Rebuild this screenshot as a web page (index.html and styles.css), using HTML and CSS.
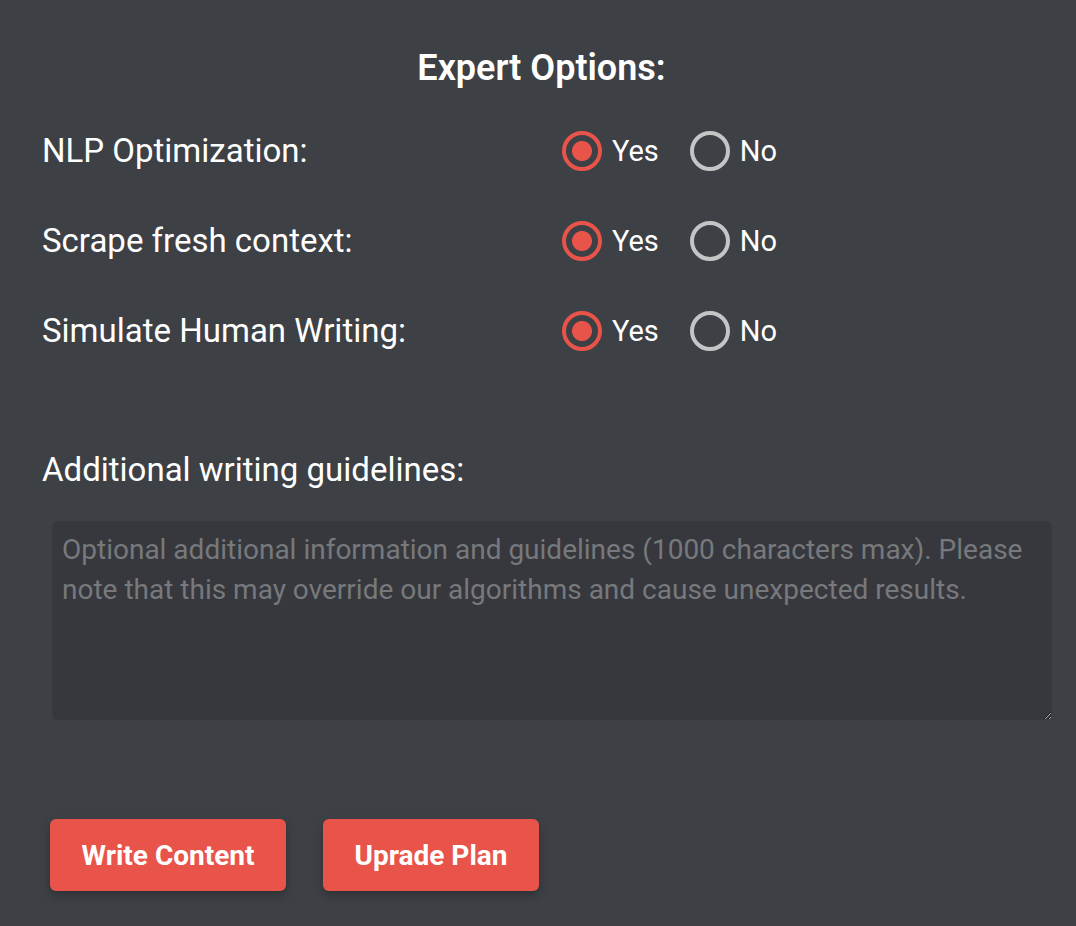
FILE: index.html
```html
<!DOCTYPE html>
<html lang="en">
<head>
    <meta charset="UTF-8">
    <meta name="viewport" content="width=device-width, initial-scale=1.0">
    <title>Expert Options</title>
    <link rel="stylesheet" href="styles.css">
</head>
<body>
    <div class="panel">
        <h2 class="panel-title">Expert Options:</h2>

        <!-- Toggles -->
        <div class="option-row">
            <div class="option-label">NLP Optimization:</div>
            <div class="option-choices">
                <label class="choice"><input type="radio" name="nlp" checked> Yes</label>
                <label class="choice"><input type="radio" name="nlp"> No</label>
            </div>
        </div>
        <div class="option-row">
            <div class="option-label">Scrape fresh context:</div>
            <div class="option-choices">
                <label class="choice"><input type="radio" name="scrape" checked> Yes</label>
                <label class="choice"><input type="radio" name="scrape"> No</label>
            </div>
        </div>
        <div class="option-row">
            <div class="option-label">Simulate Human Writing:</div>
            <div class="option-choices">
                <label class="choice"><input type="radio" name="human" checked> Yes</label>
                <label class="choice"><input type="radio" name="human"> No</label>
            </div>
        </div>

        <!-- Guidelines -->
        <div class="guidelines-label">Additional writing guidelines:</div>
        <textarea class="guidelines-input" maxlength="1000" placeholder="Optional additional information and guidelines (1000 characters max). Please note that this may override our algorithms and cause unexpected results."></textarea>

        <div class="actions">
            <button class="action-button">Write Content</button>
            <button class="action-button">Uprade Plan</button>
        </div>
    </div>
</body>
</html>
```

FILE: styles.css
```css
* {margin: 0; padding: 0; box-sizing: border-box;}
html, body {height: 100%;}
body {font-family: Roboto, "Liberation Sans", sans-serif; background-color: #3d4045; color: #fff;}
.panel {padding: 44px 35px 0 42px;}
.panel-title {font-size: 36px; font-weight: 600; text-align: center; line-height: 48px; margin-bottom: 14px;}
.option-row {display: flex; align-items: center; height: 90px;}
.option-label {width: 520px; font-size: 33px; line-height: 40px;}
.option-choices {display: flex; align-items: center; gap: 31px;}
.choice {display: flex; align-items: center; gap: 10px; font-size: 29px; cursor: pointer;}
.choice input {
    appearance: none;
    -webkit-appearance: none;
    width: 40px;
    height: 40px;
    border: 4px solid #c4c5c7;
    border-radius: 50%;
    cursor: pointer;
}
.choice input:checked {
    border-color: #e8544a;
    background: radial-gradient(circle, #e8544a 0 9.5px, transparent 10.5px);
}
.guidelines-label {font-size: 33px; line-height: 40px; margin: 74px 0 31px 0;}
.guidelines-input {
    display: block;
    width: 1000px;
    height: 199px;
    margin-left: 10px;
    padding: 9px 10px;
    background-color: #36383d;
    border: none;
    border-radius: 6px;
    color: #ddd;
    font-family: Roboto, "Liberation Sans", sans-serif;
    font-size: 28px;
    line-height: 40px;
    outline: none;
}
.guidelines-input::placeholder {color: #77797c;}
.actions {display: flex; gap: 37px; margin: 99px 0 0 8px;}
.action-button {
    width: 236px;
    height: 72px;
    background-color: #e8544a;
    color: #fff;
    border: none;
    border-radius: 6px;
    font-family: Roboto, "Liberation Sans", sans-serif;
    font-size: 28px;
    font-weight: 700;
    box-shadow: 0 4px 10px rgba(0,0,0,0.25);
    cursor: pointer;
}
.action-button + .action-button {width: 216px;}
```
